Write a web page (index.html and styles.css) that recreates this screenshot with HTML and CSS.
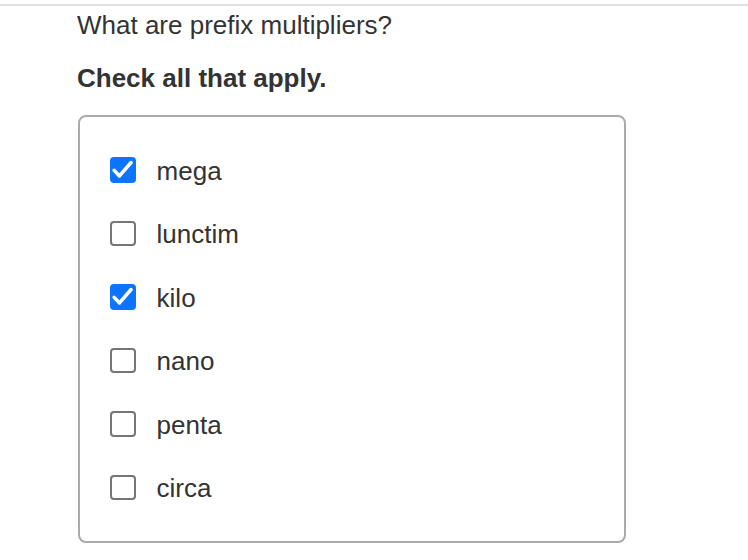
FILE: index.html
```html
<!DOCTYPE html>
<html lang="en">
<head>
<meta charset="utf-8">
<title>Prefix multipliers</title>
<link rel="stylesheet" href="styles.css">
</head>
<body>
<div class="rule"></div>
<main class="question">
  <p class="prompt">What are prefix multipliers?</p>
  <p class="instruction">Check all that apply.</p>
  <div class="choices">
    <label class="choice">
      <span class="box is-checked"><svg viewBox="0 0 26 26" width="26" height="26"><path d="M4.2 13.6 L9.6 19.2 L21.4 5.6" fill="none" stroke="#fff" stroke-width="3.6" stroke-linecap="round" stroke-linejoin="round"/></svg></span>
      <span class="text">mega</span>
    </label>
    <label class="choice">
      <span class="box"></span>
      <span class="text">lunctim</span>
    </label>
    <label class="choice">
      <span class="box is-checked"><svg viewBox="0 0 26 26" width="26" height="26"><path d="M4.2 13.6 L9.6 19.2 L21.4 5.6" fill="none" stroke="#fff" stroke-width="3.6" stroke-linecap="round" stroke-linejoin="round"/></svg></span>
      <span class="text">kilo</span>
    </label>
    <label class="choice">
      <span class="box"></span>
      <span class="text">nano</span>
    </label>
    <label class="choice">
      <span class="box"></span>
      <span class="text">penta</span>
    </label>
    <label class="choice">
      <span class="box"></span>
      <span class="text">circa</span>
    </label>
  </div>
</main>
</body>
</html>
```

FILE: styles.css
```css
html, body {
  margin: 0;
  padding: 0;
  background: #fff;
}

body {
  font-family: "Liberation Sans", Arial, Helvetica, sans-serif;
  color: #333;
  font-size: 26px;
}

.rule {
  margin-top: 4px;
  height: 0;
  border-top: 2px solid #e2e2e2;
}

.question {
  padding-left: 77px;
}

.prompt {
  margin: 5px 0 0;
  line-height: 29.4px;
}

.instruction {
  margin: 24px 0 0;
  font-weight: bold;
  line-height: 29.4px;
}

.choices {
  box-sizing: border-box;
  margin: 21.5px 0 0 1px;
  width: 548px;
  border: 2px solid #aaa;
  border-radius: 8px;
  padding: 20.75px 0 22px 30px;
  display: flex;
  flex-direction: column;
}

.choice {
  height: 63.5px;
  display: flex;
  align-items: center;
  gap: 21px;
  cursor: pointer;
}

.box {
  box-sizing: border-box;
  width: 25.6px;
  height: 25.6px;
  border: 2px solid #767676;
  border-radius: 4px;
  background: #fff;
  display: flex;
  align-items: center;
  justify-content: center;
  flex: none;
}

.box svg {
  display: block;
  width: 25.6px;
  height: 25.6px;
  flex: none;
}

.box.is-checked {
  border: none;
  background: #0b75ff;
}

.text {
  margin-top: 3px;
  line-height: 29.4px;
}
```
